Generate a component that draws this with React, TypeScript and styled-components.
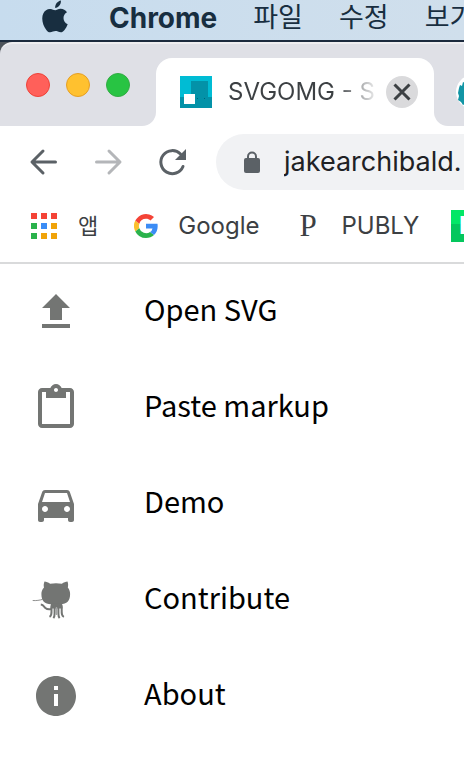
import React from "react";
import styled, { createGlobalStyle } from "styled-components";

const GlobalStyle = createGlobalStyle`
  * { box-sizing: border-box; }
  body {
    margin: 0;
    background: #fff;
    font-family: Inter, "Noto Sans CJK KR", sans-serif;
    overflow-x: hidden;
  }
  button { font: inherit; color: inherit; border: 0; padding: 0; background: none; }
  a { color: inherit; text-decoration: none; }
  svg { display: block; flex: none; }
`;

const Desktop = styled.div`
  min-height: 100vh;
  overflow: hidden;
  background: #fff;
`;

const MenuBar = styled.nav`
  display: flex;
  align-items: center;
  height: 42px;
  padding: 0 0 4px 42px;
  gap: 36px;
  border-bottom: 2px solid #1b2a3d;
  background: linear-gradient(90deg, #c7dcee, #d0dfec);
  color: #182e40;
  white-space: nowrap;
`;

const MenuBarItem = styled.button<{ $bold?: boolean }>`
  flex: none;
  font-size: ${(p) => (p.$bold ? 28 : 27)}px;
  font-weight: ${(p) => (p.$bold ? 700 : 400)};
  line-height: 34px;
`;

const AppleButton = styled(MenuBarItem)`
  padding: 0 5px 4px 0;
`;

const WindowBack = styled.div`
  background: #4d535a;
`;

const TabStrip = styled.header`
  display: flex;
  align-items: flex-end;
  height: 84px;
  border-top: 2px solid #eeeef0;
  border-top-left-radius: 12px;
  background: #dfe0e6;
`;

const TrafficLights = styled.div`
  display: flex;
  flex: none;
  gap: 16px;
  width: 156px;
  padding: 15px 0 0 26px;
  height: 68px;
  border-bottom-right-radius: 14px;
  background: #dfe0e6;
`;

const Light = styled.button<{ $fill: string; $edge: string }>`
  width: 24px;
  height: 24px;
  border: 1px solid ${(p) => p.$edge};
  border-radius: 50%;
  background: ${(p) => p.$fill};
`;

const TabBase = styled.div`
  display: flex;
  flex: none;
  background: #fff;
`;

const Tab = styled.div`
  display: flex;
  align-items: center;
  width: 278px;
  height: 68px;
  padding: 0 16px 0 24px;
  border-radius: 16px 16px 0 0;
  background: #fff;
`;

const TabShoulder = styled.div`
  background: #fff;
  flex: 1;
`;

const NextTab = styled.div`
  display: flex;
  align-items: center;
  height: 68px;
  padding-left: 22px;
  border-bottom-left-radius: 14px;
  background: #dfe0e6;
  overflow: hidden;
`;

const TabTitle = styled.span`
  flex: 1;
  min-width: 0;
  margin: 0 12px 0 16px;
  overflow: hidden;
  white-space: nowrap;
  font-size: 24px;
  line-height: 32px;
  color: transparent;
  background: linear-gradient(90deg, #3c4043 74%, #3c404300 104%);
  background-clip: text;
`;

const CloseButton = styled.button`
  display: grid;
  place-items: center;
  flex: none;
  width: 32px;
  height: 32px;
  border-radius: 50%;
  background: #dadadc;
`;

const Toolbar = styled.div`
  display: flex;
  align-items: center;
  height: 72px;
  padding-left: 24px;
  gap: 24px;
`;

const ToolButton = styled.button<{ $dim?: boolean }>`
  flex: none;
  width: 40px;
  height: 40px;
  color: ${(p) => (p.$dim ? "#b4b6b9" : "#5b6166")};
`;

const AddressBar = styled.label`
  display: flex;
  align-items: center;
  flex: 1;
  min-width: 0;
  height: 56px;
  padding-left: 28px;
  gap: 24px;
  border-radius: 28px 0 0 28px;
  background: #f1f2f4;
`;

const AddressInput = styled.input`
  flex: 1;
  min-width: 0;
  padding: 0;
  border: 0;
  outline: 0;
  background: none;
  color: #202124;
  font-family: Inter, sans-serif;
  font-size: 27px;
  line-height: 36px;
`;

const Bookmarks = styled.nav`
  display: flex;
  align-items: center;
  height: 66px;
  padding: 0 0 8px 30px;
  border-bottom: 2px solid #d9dadb;
`;

const Bookmark = styled.a`
  display: flex;
  align-items: center;
  flex: none;
  gap: 20px;
  margin-right: 36px;
  color: #3c4043;
  font-size: 24px;
  line-height: 32px;
`;

const PublyBookmark = styled(Bookmark)`
  gap: 22px;
  margin: 0 32px 0 4px;
`;

const Hangul = styled.span`
  font-size: 22px;
`;

const SerifMark = styled.span`
  width: 20px;
  font-family: "Liberation Serif", serif;
  font-size: 31px;
`;

const GreenMark = styled.span`
  width: 32px;
  padding-left: 8px;
  background: linear-gradient(#03e766 44%, #04c75d 44%);
  color: #fff;
  font-size: 24px;
  font-weight: 900;
`;

const ActionList = styled.ul`
  margin: 0;
  padding: 0;
  list-style: none;
`;

const Action = styled.button`
  display: flex;
  align-items: center;
  width: 100%;
  height: 96px;
  padding: 0 32px;
  gap: 64px;
  text-align: left;
  color: #737573;
`;

const ActionLabel = styled.span`
  padding-bottom: 9px;
  color: #000;
  font-family: "Noto Sans CJK KR", sans-serif;
  font-size: 29px;
  line-height: 40px;
`;

const MaterialIcon = ({ d }: { d: string }) => (
  <svg width="48" height="48" viewBox="0 0 24 24" fill="currentColor" fillRule="evenodd">
    <path d={d} />
  </svg>
);

const Octocat = () => (
  <svg width="48" height="48" viewBox="0 0 48 48" fill="currentColor">
    <path d="M12.500 5.500c1.900.1 3.700.9 5.600 2.300c3.900-.8 7.900-.8 11.800 0c1.900-1.400 3.700-2.200 5.600-2.300c.8 2 .8 4 .3 5.900c1.700 2 2.300 4.200 2.300 6.600c0 6.800-3.300 10.200-9.600 10.200H19c-6.300 0-9.600-3.400-9.600-10.200c0-2.400.7-4.600 2.600-6.600c-.5-1.900-.3-3.900.5-5.900z" />
    <path d="M19 27.500h11l.5 5h-12z" />
    <path
      d="M8.800 28.500c2.700.3 3.200 2.200 4.600 3.500c1.600 1.400 3.600 1.500 6 1"
      fill="none"
      stroke="currentColor"
      strokeWidth="2"
    />
    <path
      d="M19.800 29c-.8 3 .2 6.500-.6 9.500c-.3 1.300-.8 1.900-1.700 2.400M22.600 29v8.500c0 2-.2 3.500-1.200 4.600M26.400 29v8.500c0 2 .2 3.500 1.200 4.600M29.400 29c.8 3-.2 6.500.6 9.500c.3 1.300.8 1.900 1.900 2.400"
      fill="none"
      stroke="currentColor"
      strokeWidth="2"
    />
    <path fill="#a3a5a5" d="M23.800 31h1.400v8h-1.400z" />
    <path d="M.7 24.500c3.500.3 7-.2 10-1.200" fill="none" stroke="currentColor" strokeWidth=".8" />
  </svg>
);

const actions = [
  { label: "Open SVG", icon: <MaterialIcon d="M9 16h6v-6h4l-7-7-7 7h4zM5 18h14v2H5z" /> },
  {
    label: "Paste markup",
    icon: (
      <MaterialIcon d="M19 2h-4.180C14.400.84 13.300 0 12 0c-1.300 0-2.400.84-2.820 2H5c-1.100 0-2 .9-2 2v16c0 1.100.9 2 2 2h14c1.100 0 2-.9 2-2V4c0-1.100-.9-2-2-2zm-7 0c.55 0 1 .45 1 1s-.45 1-1 1-1-.45-1-1 .45-1 1-1zm7 18H5V4h2v3h10V4h2v16z" />
    ),
  },
  {
    label: "Demo",
    icon: (
      <MaterialIcon d="M18.920 6.010C18.720 5.420 18.160 5 17.500 5h-11c-.66 0-1.210.42-1.420 1.010L3 12v8c0 .55.45 1 1 1h1c.55 0 1-.45 1-1v-1h12v1c0 .55.45 1 1 1h1c.55 0 1-.45 1-1v-8l-2.080-5.990zM6.500 16c-.83 0-1.500-.67-1.500-1.500S5.670 13 6.500 13s1.500.67 1.500 1.500S7.330 16 6.500 16zm11 0c-.83 0-1.500-.67-1.500-1.500s.67-1.500 1.500-1.500 1.500.67 1.500 1.500-.67 1.500-1.500 1.500zM5 11l1.500-4.500h11L19 11H5z" />
    ),
  },
  { label: "Contribute", icon: <Octocat /> },
  {
    label: "About",
    icon: (
      <MaterialIcon d="M12 2C6.480 2 2 6.480 2 12s4.480 10 10 10 10-4.480 10-10S17.520 2 12 2zm1 15h-2v-6h2v6zm0-8h-2V7h2v2z" />
    ),
  },
];

const AppleLogo = () => (
  <svg width="26" height="34" viewBox="0 0 26 34" fill="#182e40">
    <path d="M13.200 9C12.700 5.400 15.600 2.100 18.900 1.500c.4 3.800-2.600 7.300-5.700 7.500z" />
    <path d="M25 13.300c-2.200 1.300-3.500 3.200-3.500 5.700c0 2.900 1.600 5.200 4.200 6.300c-.7 2.100-1.800 4-3.200 5.800c-2.600 3.400-4.700 2.100-6.600 1.400c-1.700-.6-3.300-.6-5 .1c-2.300 1-4.200 1.400-6.400-1.400C.7 26.500-1 19.200 1.300 14.500c1.500-3.200 4.300-4.800 7.200-4.500c1.900.2 3.200 1.200 4.700 1.200c1.300 0 3-1.300 5.200-1.400c2.700-.1 5 1.100 6.600 3.500z" />
  </svg>
);

const SvgomgLogo = () => (
  <svg width="32" height="32" viewBox="0 0 32 32" shapeRendering="crispEdges">
    <path fill="#00bcd4" d="M0 0h32v32H0z" />
    <path fill="#0392a8" d="M11 5h17v16h4v11H0V21h11z" />
    <path fill="#fff" d="M4 18h11v10H4z" />
    <path fill="#006377" d="M17 22h1v1h-1zM24 22h1v1h-1z" />
  </svg>
);

const NextTabLogo = () => (
  <svg width="34" height="34" viewBox="0 0 34 34">
    <circle cx="17" cy="17" r="17" fill="#fff" />
    <path fill="#1295a5" d="M3 13l1-3 2 1 1-4 4 2 4-3 12 12-12 12-6-1-2 1-2-3-3-2 1-4-1-3z" />
  </svg>
);

const appColors = ["#f44336", "#f44336", "#f44336", "#2bb24c", "#3b8cf5", "#f0a30a", "#2bb24c", "#f0a30a", "#f0a30a"];

const AppsGrid = () => (
  <svg width="28" height="26" viewBox="0 0 28 26">
    {appColors.map((fill, i) => (
      <rect key={i} x={1 + (i % 3) * 10} y={Math.floor(i / 3) * 10} width="6" height="6" fill={fill} />
    ))}
  </svg>
);

const GoogleLogo = () => (
  <svg width="24" height="24" viewBox="0 0 24 24">
    <path fill="#fbc02d" d="M5.300 14.300a7 7 0 0 1 0-4.600L1.300 6.600a12 12 0 0 0 0 10.800z" />
    <path fill="#f44336" d="M12 4.800c1.800 0 3.300.6 4.500 1.700L20 3.100A12 12 0 0 0 1.300 6.600l4 3.100A7.100 7.100 0 0 1 12 4.800z" />
    <path fill="#2bb24c" d="M12 24c3.200 0 6-1.100 8-2.900l-3.900-3A7.200 7.200 0 0 1 5.300 14.300l-4 3.100A12 12 0 0 0 12 24z" />
    <path fill="#3b8cf5" d="M23.500 9.800H12v4.700h6.500a5.600 5.600 0 0 1-2.400 3.600l3.900 3c2.900-2.700 4.200-6.600 3.500-11.300z" />
  </svg>
);

const ArrowIcon = ({ right }: { right?: boolean }) => (
  <svg width="40" height="40" viewBox="0 0 40 40" fill="none" stroke="currentColor" strokeWidth="3" strokeLinecap="round" strokeLinejoin="round">
    <path d={right ? "M8.500 20h23M21 9l11 11-11 11" : "M31.500 20h-23M19 9L8 20l11 11"} />
  </svg>
);

const ReloadIcon = () => (
  <svg width="40" height="40" viewBox="0 0 40 40">
    <path d="M28.500 12A11.500 11.500 0 1 0 31 24.500" fill="none" stroke="currentColor" strokeWidth="3" strokeLinecap="round" />
    <path d="M34 7v11H23z" fill="currentColor" />
  </svg>
);

const LockIcon = () => (
  <svg width="16" height="22" viewBox="0 0 16 22">
    <path d="M4 9V5.500a4 4 0 0 1 8 0V9" fill="none" stroke="#5b6166" strokeWidth="2" />
    <rect y="7" width="16" height="15" rx="2" fill="#5b6166" />
  </svg>
);

export default function App() {
  return (
    <Desktop>
      <GlobalStyle />
      <MenuBar aria-label="Menu bar">
        <AppleButton aria-label="Apple"><AppleLogo /></AppleButton>
        <MenuBarItem $bold>Chrome</MenuBarItem>
        <MenuBarItem>파일</MenuBarItem>
        <MenuBarItem>수정</MenuBarItem>
        <MenuBarItem>보기</MenuBarItem>
      </MenuBar>
      <WindowBack>
        <TabStrip>
          <TabBase>
            <TrafficLights>
              <Light $fill="#ff605a" $edge="#ee4238" aria-label="Close window" />
              <Light $fill="#ffc12f" $edge="#e69f24" aria-label="Minimize window" />
              <Light $fill="#28c443" $edge="#32ac43" aria-label="Zoom window" />
            </TrafficLights>
          </TabBase>
          <Tab>
            <SvgomgLogo />
            <TabTitle>SVGOMG - SV</TabTitle>
            <CloseButton aria-label="Close tab">
              <svg width="18" height="18" viewBox="0 0 18 18" stroke="#3c4043" strokeWidth="3">
                <path d="M1.500 1.500l15 15M16.500 1.500l-15 15" />
              </svg>
            </CloseButton>
          </Tab>
          <TabShoulder>
            <NextTab><NextTabLogo /></NextTab>
          </TabShoulder>
        </TabStrip>
      </WindowBack>
      <Toolbar>
        <ToolButton aria-label="Back"><ArrowIcon /></ToolButton>
        <ToolButton $dim aria-label="Forward"><ArrowIcon right /></ToolButton>
        <ToolButton aria-label="Reload"><ReloadIcon /></ToolButton>
        <AddressBar>
          <LockIcon />
          <AddressInput aria-label="Address" defaultValue="jakearchibald." />
        </AddressBar>
      </Toolbar>
      <Bookmarks aria-label="Bookmarks">
        <Bookmark href="#apps"><AppsGrid /><Hangul>앱</Hangul></Bookmark>
        <Bookmark href="#google"><GoogleLogo />Google</Bookmark>
        <PublyBookmark href="#publy"><SerifMark>P</SerifMark>PUBLY</PublyBookmark>
        <Bookmark href="#naver"><GreenMark>N</GreenMark></Bookmark>
      </Bookmarks>
      <main>
        <ActionList>
          {actions.map((a) => (
            <li key={a.label}>
              <Action>
                {a.icon}
                <ActionLabel>{a.label}</ActionLabel>
              </Action>
            </li>
          ))}
        </ActionList>
      </main>
    </Desktop>
  );
}
